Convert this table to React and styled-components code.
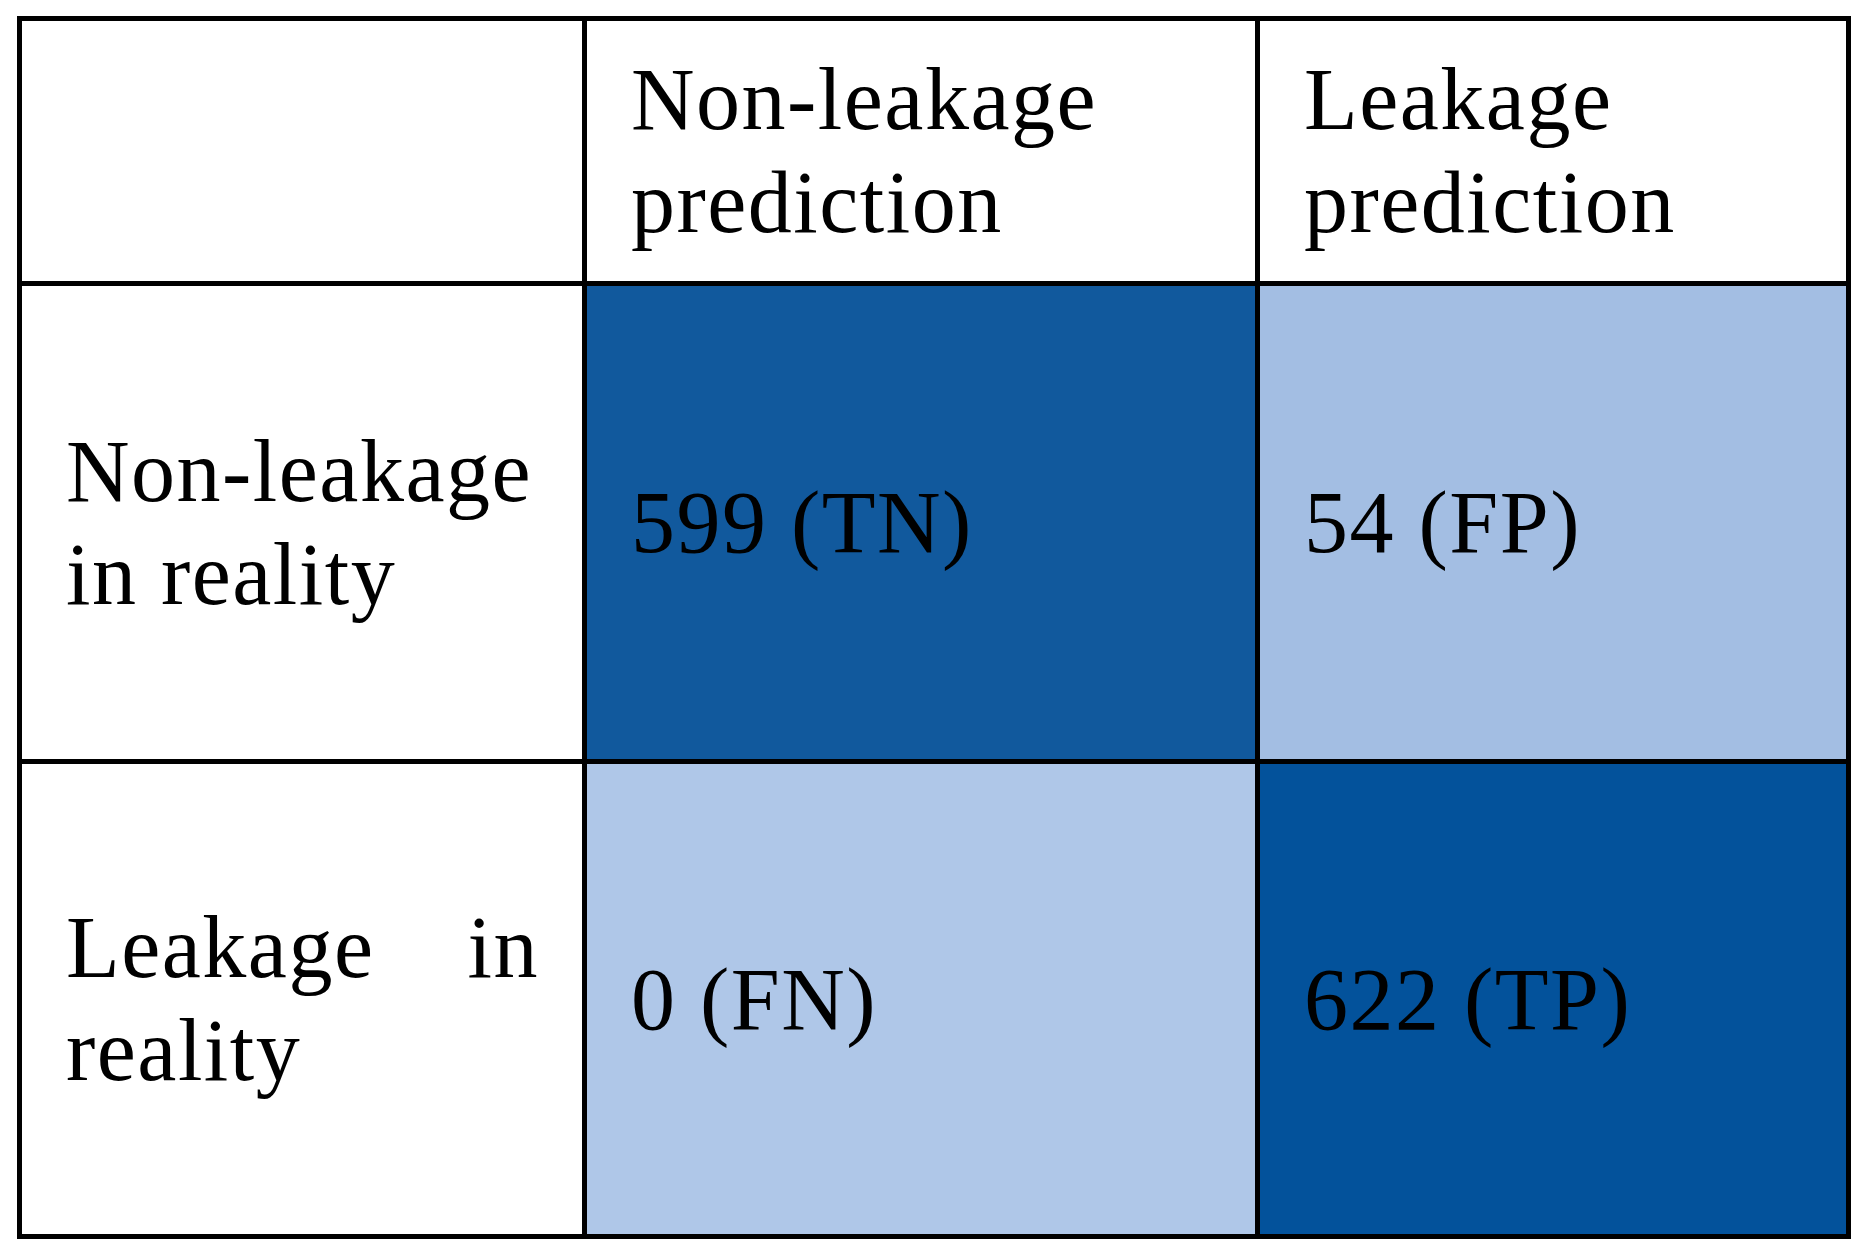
import React from "react";
import styled, { createGlobalStyle } from "styled-components";

// Colors
const colors = {
  line: "#000000",
  paper: "#ffffff",
  trueNeg: "#11599d",
  falsePos: "#a3bee3",
  falseNeg: "#afc7e8",
  truePos: "#03529b"
};

const GlobalStyle = createGlobalStyle`
  html, body {
    margin: 0;
    padding: 0;
    background: ${colors.paper};
  }
`;

const Page = styled.div`
  padding: 16px 0 0 17px;
`;

// The matrix: black background shows through the gaps as the ruling
const Matrix = styled.div`
  display: grid;
  grid-template-columns: 560px 668px 586px;
  grid-template-rows: 260px 473px 470px;
  gap: 5px;
  padding: 5px;
  width: max-content;
  background: ${colors.line};
`;

const Cell = styled.div`
  display: flex;
  align-items: center;
  padding: 0 43px 0 44px;
  background: ${props => props.fill || colors.paper};
  color: #000;
  font-family: "Liberation Serif", "Times New Roman", serif;
  font-size: 88px;
  line-height: 103px;
  letter-spacing: 1.5px;
`;

const Label = styled.p`
  margin: 0;
  width: 100%;
  text-align: justify;
`;

const rows = [
  {
    label: "Non-leakage in reality",
    cells: [
      { text: "599 (TN)", fill: colors.trueNeg },
      { text: "54 (FP)", fill: colors.falsePos }
    ]
  },
  {
    label: "Leakage in reality",
    cells: [
      { text: "0 (FN)", fill: colors.falseNeg },
      { text: "622 (TP)", fill: colors.truePos }
    ]
  }
];

const App = () => {
  return (
    <>
      <GlobalStyle />
      <Page>
        <Matrix>
          <Cell />
          <Cell>
            <Label>Non-leakage prediction</Label>
          </Cell>
          <Cell>
            <Label>Leakage prediction</Label>
          </Cell>
          {rows.map(row => (
            <React.Fragment key={row.label}>
              <Cell>
                <Label>{row.label}</Label>
              </Cell>
              {row.cells.map(cell => (
                <Cell key={cell.text} fill={cell.fill}>
                  <Label>{cell.text}</Label>
                </Cell>
              ))}
            </React.Fragment>
          ))}
        </Matrix>
      </Page>
    </>
  );
};

export default App;
